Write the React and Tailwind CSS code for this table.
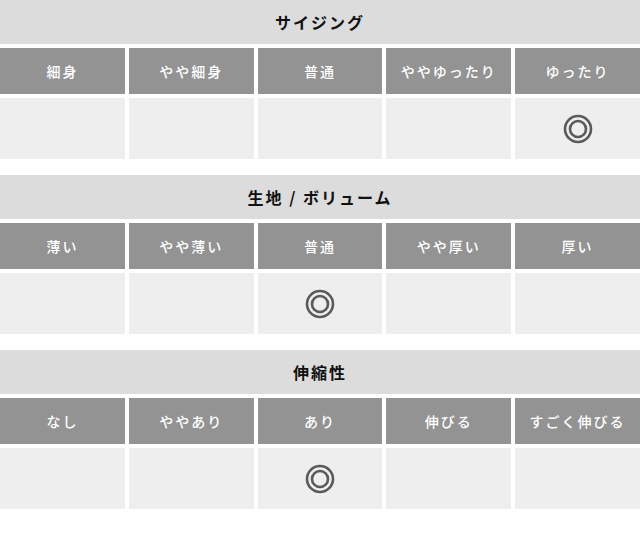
import React from "react";

const sections = [
  { title: "サイジング", items: ["細身", "やや細身", "普通", "ややゆったり", "ゆったり"], sel: 4 },
  { title: "生地 / ボリューム", items: ["薄い", "やや薄い", "普通", "やや厚い", "厚い"], sel: 2 },
  { title: "伸縮性", items: ["なし", "ややあり", "あり", "伸びる", "すごく伸びる"], sel: 2 },
];

function Mark() {
  return (
    <svg width="30" height="30" viewBox="0 0 30 30">
      <circle cx="15" cy="15" r="13" fill="none" stroke="#5a5a5a" strokeWidth="2.6" />
      <circle cx="15" cy="15" r="8" fill="none" stroke="#5a5a5a" strokeWidth="2.6" />
    </svg>
  );
}

export default function App() {
  return (
    <div
      className="w-[640px] bg-white"
      style={{ fontFamily: '"Noto Sans CJK JP", "Noto Sans", sans-serif' }}
    >
      {sections.map((s) => (
        <div key={s.title} className="mb-4 flex flex-col gap-1">
          <div className="flex h-[44px] items-center justify-center bg-[#dcdcdc] text-[16px] font-bold tracking-[2px] text-[#111]">
            {s.title}
          </div>
          <div className="grid grid-cols-5 gap-1">
            {s.items.map((it) => (
              <div
                key={it}
                className="flex h-[46px] items-center justify-center bg-[#939393] text-[14px] font-medium tracking-[2px] text-white"
              >
                {it}
              </div>
            ))}
          </div>
          <div className="grid grid-cols-5 gap-1">
            {s.items.map((it, i) => (
              <div key={it} className="flex h-[61px] items-center justify-center bg-[#eeeeee]">
                {i === s.sel ? <Mark /> : null}
              </div>
            ))}
          </div>
        </div>
      ))}
    </div>
  );
}
